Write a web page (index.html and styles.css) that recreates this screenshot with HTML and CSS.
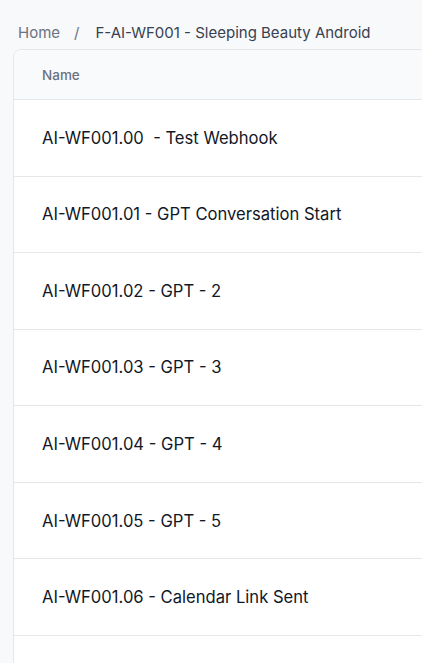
FILE: index.html
```html
<!DOCTYPE html>
<html>
<head>
<meta charset="utf-8">
<link rel="stylesheet" href="styles.css">
</head>
<body>
<div class="page">
  <nav class="crumbs">
    <span class="crumb-home">Home</span>
    <span class="crumb-sep">/</span>
    <span class="crumb-current">F-AI-WF001 - Sleeping Beauty Android</span>
  </nav>
  <div class="card">
    <div class="head">Name</div>
    <div class="row">AI-WF001.00&nbsp; - Test Webhook</div>
    <div class="row">AI-WF001.01 - GPT Conversation Start</div>
    <div class="row">AI-WF001.02 - GPT - 2</div>
    <div class="row">AI-WF001.03 - GPT - 3</div>
    <div class="row">AI-WF001.04 - GPT - 4</div>
    <div class="row">AI-WF001.05 - GPT - 5</div>
    <div class="row">AI-WF001.06 - Calendar Link Sent</div>
    <div class="row"></div>
  </div>
</div>
</body>
</html>
```
FILE: styles.css
```css
html, body {
  margin: 0;
  padding: 0;
  background: #f8f9fb;
  overflow: hidden;
  height: 100%;
}
body {
  font-family: Inter, "Noto Sans", sans-serif;
}
.page {
  padding: 22px 0 0 13px;
}
.crumbs {
  display: flex;
  align-items: center;
  font-size: 15px;
  line-height: 22px;
  padding-left: 5px;
  margin-bottom: 5px;
}
.crumb-home {
  color: #6b7280;
}
.crumb-sep {
  color: #6b7280;
  margin: 0 16px 0 14px;
}
.crumb-current {
  color: #374151;
}
.card {
  width: 520px;
  background: #fff;
  border: 1px solid #e5e7eb;
  border-radius: 8px 0 0 0;
  overflow: hidden;
}
.head {
  height: 49px;
  display: flex;
  align-items: center;
  padding-left: 28px;
  background: #f9fafb;
  border-bottom: 1px solid #e5e7eb;
  font-size: 13.5px;
  font-weight: 500;
  color: #6b7280;
}
.row {
  height: 75.57px;
  display: flex;
  align-items: center;
  padding-left: 28px;
  border-bottom: 1px solid #e5e7eb;
  font-size: 16.6px;
  color: #111827;
}
```
